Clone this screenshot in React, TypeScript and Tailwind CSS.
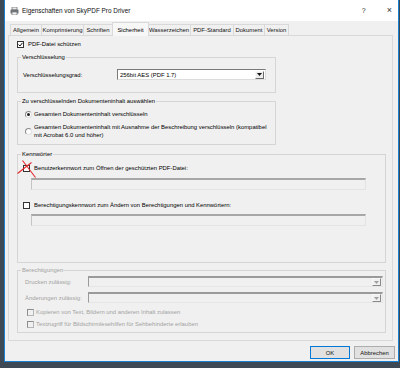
import React from 'react';

function CheckBox({ checked = false, disabled = false }: { checked?: boolean; disabled?: boolean }) {
    return (
        <span
            className={
                disabled
                    ? 'w-[7px] h-[7px] shrink-0 flex items-center justify-center border border-[#b5b5b5] border-t-[#8d8d8d] border-l-[#8d8d8d] bg-[#f0f0f0]'
                    : 'w-[7px] h-[7px] shrink-0 flex items-center justify-center border border-[#333333] bg-white'
            }
        >
            {checked && (
                <svg width="5" height="5" viewBox="0 0 5 5">
                    <path d="M0.5 2.5 L2 4 L4.5 0.8" fill="none" stroke="#111" strokeWidth="1" />
                </svg>
            )}
        </span>
    );
}

function Radio({ checked = false }: { checked?: boolean }) {
    return (
        <span className="w-[7px] h-[7px] shrink-0 rounded-full flex items-center justify-center border border-[#8a8a8a] border-b-[#e0e0e0] border-r-[#e0e0e0] bg-white">
            {checked && <span className="w-[3px] h-[3px] rounded-full bg-[#222]" />}
        </span>
    );
}

function DropArrow({ disabled = false }: { disabled?: boolean }) {
    return (
        <span
            className={
                disabled
                    ? 'w-[9px] h-[8px] flex items-center justify-center border border-[#f8f8f8] border-b-[#8a8a8a] border-r-[#8a8a8a] bg-[#f0f0f0]'
                    : 'w-[9px] h-[8px] flex items-center justify-center border border-[#f8f8f8] border-b-[#6a6a6a] border-r-[#6a6a6a] bg-[#ececec]'
            }
        >
            <svg width="5" height="3" viewBox="0 0 5 3">
                <path d="M0 0 H5 L2.5 3 Z" fill={disabled ? '#a0a0a0' : '#111'} />
            </svg>
        </span>
    );
}

const tabs = [
    { label: 'Allgemein', w: 'w-[32px]' },
    { label: 'Komprimierung', w: 'w-[43px]' },
    { label: 'Schriften', w: 'w-[30px]' },
    { label: 'Sicherheit', w: 'w-[37px]', active: true },
    { label: 'Wasserzeichen', w: 'w-[44px]' },
    { label: 'PDF-Standard', w: 'w-[44px]' },
    { label: 'Dokument', w: 'w-[32px]' },
    { label: 'Version', w: 'w-[25px]' },
];

export default function App() {
    return (
        <div className="w-[400px] h-[368px] bg-[#3d4a55] pl-[4px] pr-[1px] pb-[6px] flex font-['Liberation_Sans',Arial,sans-serif] text-[5.9px] leading-[8px] text-black">
            <div className="flex-1 flex flex-col border-x border-b border-[#1a80d4] bg-[#f0f0f0]">
                {/* title bar */}
                <div className="h-[21px] shrink-0 bg-white flex items-center pl-[5px]">
                    <svg width="9" height="8" viewBox="0 0 9 8" className="shrink-0">
                        <rect x="2" y="0" width="5" height="3" fill="#e8e8e8" stroke="#7a7a7a" strokeWidth="0.8" />
                        <rect x="0.5" y="2.5" width="8" height="4" rx="0.6" fill="#6e7378" />
                        <rect x="2" y="5" width="5" height="3" fill="#f4f4f4" stroke="#7a7a7a" strokeWidth="0.8" />
                    </svg>
                    <span className="ml-[3px] text-[6.4px] text-[#111]">Eigenschaften von SkyPDF Pro Driver</span>
                    <span className="ml-auto text-[7px] text-[#333] mr-[21px]">?</span>
                    <span className="text-[9px] leading-[9px] text-[#333] mr-[6px]">×</span>
                </div>

                {/* body */}
                <div className="flex-1 flex flex-col pl-[3px] pr-[5px] pt-[1px]">
                    <div className="h-[14px] flex items-end pl-[2px]">
                        {tabs.map((t) =>
                            t.active ? (
                                <div
                                    key={t.label}
                                    className={`${t.w} relative z-10 h-[14px] -mx-[1px] bg-[#f7f7f7] border border-b-0 border-[#d9d9d9] flex items-center justify-center`}
                                >
                                    {t.label}
                                </div>
                            ) : (
                                <div
                                    key={t.label}
                                    className={`${t.w} h-[12px] bg-[#f0f0f0] border border-[#d9d9d9] -ml-[1px] first:ml-0 flex items-center justify-center text-[#111]`}
                                >
                                    {t.label}
                                </div>
                            )
                        )}
                    </div>

                    {/* tab page */}
                    <div className="h-[306px] -mt-[1px] border border-[#d9d9d9] bg-[#f0f0f0] pl-[8px] pr-[6px] pt-[4px] flex flex-col">
                        <div className="flex items-center gap-[4px]">
                            <CheckBox checked />
                            <span>PDF-Datei schützen</span>
                        </div>

                        {/* Verschlüsselung */}
                        <fieldset className="mt-[5px] w-[259px] border border-[#d5d5d5] pt-[8px] pb-[12px]">
                            <legend className="ml-[3px] px-[1px]">Verschlüsselung</legend>
                            <div className="flex items-center">
                                <span className="ml-[5px] w-[94px]">Verschlüsselungsgrad:</span>
                                <div className="w-[149px] h-[11px] bg-white border border-[#7a7a7a] border-b-[#dcdcdc] border-r-[#dcdcdc] flex items-center pl-[2px] pr-[1px]">
                                    <span>256bit AES (PDF 1.7)</span>
                                    <span className="ml-auto">
                                        <DropArrow />
                                    </span>
                                </div>
                            </div>
                        </fieldset>

                        {/* Dokumenteninhalt */}
                        <fieldset className="mt-[4px] w-[259px] border border-[#d5d5d5] pt-[5px] pb-[5px]">
                            <legend className="ml-[3px] px-[1px]">Zu verschlüsselnden Dokumenteninhalt auswählen</legend>
                            <div className="flex items-center gap-[2px] pl-[7px]">
                                <Radio checked />
                                <span>Gesamten Dokumenteninhalt verschlüsseln</span>
                            </div>
                            <div className="flex items-center gap-[2px] pl-[7px] mt-[5px]">
                                <Radio />
                                <span>
                                    Gesamten Dokumenteninhalt mit Ausnahme der Beschreibung verschlüsseln (kompatibel
                                    <br />
                                    mit Acrobat 6.0 und höher)
                                </span>
                            </div>
                        </fieldset>

                        {/* Kennwörter */}
                        <fieldset className="mt-[5px] border border-[#d5d5d5] pt-[6px] pb-[36px]">
                            <legend className="ml-[3px] px-[1px]">Kennwörter</legend>
                            <div className="flex items-center gap-[4px] pl-[5px]">
                                <span className="relative">
                                    <CheckBox />
                                    <svg width="20" height="19" viewBox="0 0 20 19" className="absolute left-[-6px] top-[-5px] overflow-visible">
                                        <path d="M5.5 0.5 L18.5 17.5" stroke="#e3262b" strokeWidth="1.1" fill="none" />
                                        <path d="M0.5 13.5 L14.5 2.5" stroke="#e3262b" strokeWidth="1.1" fill="none" />
                                    </svg>
                                </span>
                                <span>Benutzerkennwort zum Öffnen der geschützten PDF-Datei:</span>
                            </div>
                            <div className="ml-[13px] mt-[6px] w-[335px] h-[12px] bg-[#f0f0f0] border border-[#e3e3e3] border-t-[2px] border-t-[#a7a7a7] border-l-[#c4c4c4]" />
                            <div className="flex items-center gap-[4px] pl-[5px] mt-[11px]">
                                <CheckBox />
                                <span>Berechtigungskennwort zum Ändern von Berechtigungen und Kennwörtern:</span>
                            </div>
                            <div className="ml-[13px] mt-[5px] w-[335px] h-[12px] bg-[#f0f0f0] border border-[#e3e3e3] border-t-[2px] border-t-[#a7a7a7] border-l-[#c4c4c4]" />
                        </fieldset>

                        {/* Berechtigungen */}
                        <fieldset className="mt-[3px] border border-[#d5d5d5] pt-[2px] pb-[4px] text-[#a3a3a3]">
                            <legend className="ml-[3px] px-[1px]">Berechtigungen</legend>
                            <div className="flex items-center">
                                <span className="ml-[7px] w-[63px]">Drucken zulässig:</span>
                                <div className="flex-1 mr-[2px] h-[11px] bg-[#f0f0f0] border border-[#e6e6e6] border-t-[#9a9a9a] border-l-[#9a9a9a] border-t-[2px] flex items-center justify-end pr-[1px]">
                                    <DropArrow disabled />
                                </div>
                            </div>
                            <div className="flex items-center mt-[5px]">
                                <span className="ml-[7px] w-[63px]">Änderungen zulässig:</span>
                                <div className="flex-1 mr-[2px] h-[11px] bg-[#f0f0f0] border border-[#e6e6e6] border-t-[#9a9a9a] border-l-[#9a9a9a] border-t-[2px] flex items-center justify-end pr-[1px]">
                                    <DropArrow disabled />
                                </div>
                            </div>
                            <div className="flex items-center gap-[2px] pl-[9px] mt-[5px]">
                                <CheckBox disabled />
                                <span>Kopieren von Text, Bildern und anderen Inhalt zulassen</span>
                            </div>
                            <div className="flex items-center gap-[2px] pl-[9px] mt-[4px]">
                                <CheckBox disabled />
                                <span>Textzugriff für Bildschirmlesehilfen für Sehbehinderte erlauben</span>
                            </div>
                        </fieldset>
                    </div>

                    {/* buttons */}
                    <div className="mt-[5px] flex justify-end gap-[4px] -mr-[2px]">
                        <button className="w-[40px] h-[13px] bg-[#e1e1e1] border border-[#0078d7] flex items-center justify-center text-[#111]">
                            OK
                        </button>
                        <button className="w-[41px] h-[13px] bg-[#e1e1e1] border border-[#adadad] flex items-center justify-center text-[#111]">
                            Abbrechen
                        </button>
                    </div>
                </div>
            </div>
        </div>
    );
}
